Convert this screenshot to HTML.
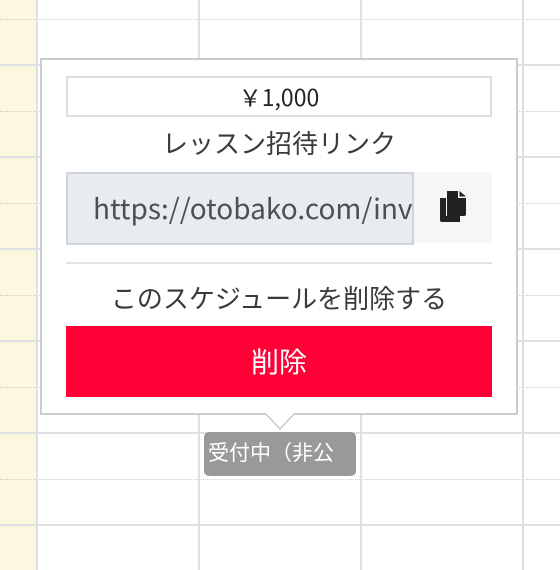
<!DOCTYPE html>
<html><head><meta charset="utf-8"><style>
*{margin:0;padding:0;box-sizing:border-box}
body{width:560px;height:570px;overflow:hidden;background:#fff;position:relative;font-family:"Noto Sans CJK JP","Liberation Sans",sans-serif}
.a{position:absolute}
.v{position:absolute;top:0;width:2px;height:570px;background:#dde1e6}
.hs{position:absolute;left:0;width:560px;height:2px;background:#dde1e6}
.hd{position:absolute;left:0;width:560px;height:0;border-top:1px dotted #c9cdd2}
</style></head><body>
<div class="a" style="left:0;top:0;width:36px;height:570px;background:#fdf7df"></div>
<div class="hd" style="top:19px"></div><div class="hd" style="top:111px"></div><div class="hd" style="top:203px"></div><div class="hd" style="top:295px"></div><div class="hd" style="top:387px"></div><div class="hd" style="top:479px"></div>
<div class="hs" style="top:64px"></div><div class="hs" style="top:156px"></div><div class="hs" style="top:248px"></div><div class="hs" style="top:340px"></div><div class="hs" style="top:432px"></div><div class="hs" style="top:524px"></div>
<div class="v" style="left:36px"></div><div class="v" style="left:198px"></div><div class="v" style="left:360px"></div><div class="v" style="left:522px"></div>
<div class="a" style="left:204px;top:432px;width:152px;height:44px;background:#999;border-radius:5px;color:#fff;font-size:21px;line-height:40px;padding:0 0 0 4px;white-space:nowrap;overflow:hidden">受付中（非公</div>
<div class="a" style="left:40px;top:58px;width:478px;height:357px;background:#fff;border:2px solid #ccc"></div>
<svg class="a" style="left:263px;top:412px" width="34" height="20"><path d="M2 1 L17 17 L32 1" fill="#fff" stroke="#c8c8c8" stroke-width="1.5"/><rect x="3" y="0" width="28" height="2" fill="#fff"/></svg>
<div class="a" style="left:66px;top:76px;width:426px;height:41px;border:2px solid #ddd;text-align:center;font-size:23px;line-height:37px;color:#222">￥1,000</div>
<div class="a" style="left:66px;top:126px;width:426px;text-align:center;font-size:26px;color:#3a3a3a;line-height:34px">レッスン招待リンク</div>
<div class="a" style="left:66px;top:172px;width:348px;height:73px;background:#e9ecef;border:2px solid #ced4da;font-size:28px;line-height:69px;color:#495057;padding:0 0 0 25px;white-space:nowrap;overflow:hidden">https://otobako.com/invite</div>
<div class="a" style="left:414px;top:172px;width:78px;height:71px;background:#f5f6f8"></div>
<svg class="a" style="left:438px;top:189px" width="32" height="36"><path d="M2 9 H8 V27 H22 V33 H4 Q2 33 2 31 Z" fill="#222"/><path d="M9 2 H20 V9 H28 V25 Q28 27 26 27 H9 Z" fill="#222"/><path d="M21.5 2 L28 7.5 H21.5 Z" fill="#222"/></svg>
<div class="a" style="left:66px;top:262px;width:426px;height:2px;background:#e2e2e2"></div>
<div class="a" style="left:66px;top:281px;width:426px;text-align:center;font-size:26px;color:#3a3a3a;line-height:34px">このスケジュールを削除する</div>
<div class="a" style="left:66px;top:326px;width:426px;height:71px;background:#ff0037;color:#fff;text-align:center;font-size:28px;line-height:71px">削除</div>
</body></html>
